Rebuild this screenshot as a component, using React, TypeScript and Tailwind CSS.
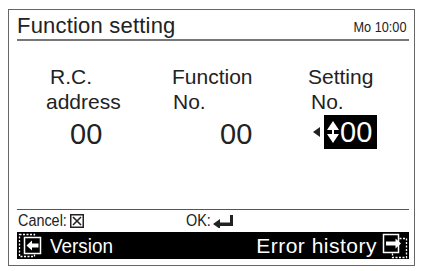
import React from 'react';

const font = { fontFamily: '"Liberation Sans", Arial, sans-serif' };

// page-back icon (dashed page behind, arrow pointing left)
function PrevIcon() {
  return (
    <svg width="26" height="27" viewBox="0 0 26 27" className="shrink-0">
      <rect x="2.5" y="2.5" width="15" height="22" fill="none" stroke="#fff" strokeWidth="1.3" strokeDasharray="2 1.5" />
      <rect x="7.5" y="5.5" width="16" height="16" fill="#000" stroke="#fff" strokeWidth="1.5" />
      <path d="M9.5 13.5 L15 8.5 V11.5 H21.5 V15.5 H15 V18.5 Z" fill="#fff" />
    </svg>
  );
}

// page-forward icon (arrow pointing right, dashed page in front)
function NextIcon() {
  return (
    <svg width="28" height="27" viewBox="0 0 28 27" className="shrink-0">
      <rect x="11.5" y="6.5" width="14" height="19" fill="none" stroke="#fff" strokeWidth="1.3" strokeDasharray="2 1.5" />
      <rect x="2.5" y="2.5" width="15" height="18" fill="#000" stroke="#fff" strokeWidth="1.5" />
      <path d="M20 11.5 L14.5 6.5 V9.5 H5 V13.5 H14.5 V16.5 Z" fill="#fff" />
    </svg>
  );
}

export default function App() {
  return (
    <div className="w-[425px] h-[271px] bg-white pt-[9px] pl-[8px] text-[#222]" style={font}>
      <div className="w-[407px] h-[257px] border border-[#666] flex flex-col">
        {/* header */}
        <div className="mx-[8px] mr-[5px] h-[31px] flex items-end justify-between border-b-2 border-[#777]">
          <span className="text-[22px] leading-none pb-[2px] tracking-[0.2px]">Function setting</span>
          <span className="text-[15px] leading-none pb-[5px] inline-block scale-x-85 origin-right mr-[2px]">Mo 10:00</span>
        </div>

        {/* body */}
        <div className="h-[168px] flex text-[21px] leading-[25px]">
          <div className="w-[155px] pt-[23px] pl-[37px]">
            <div className="pl-[4px]">R.C.</div>
            <div>address</div>
            <div className="text-[29px] leading-[34px] pl-[24px] pt-[3px]">00</div>
          </div>
          <div className="w-[136px] pt-[23px] pl-[8px]">
            <div>Function</div>
            <div className="pl-[1px]">No.</div>
            <div className="text-[29px] leading-[34px] pl-[48px] pt-[3px]">00</div>
          </div>
          <div className="pt-[23px] pl-[8px]">
            <div>Setting</div>
            <div className="pl-[3px]">No.</div>
            <div className="flex items-center pl-[5px] pt-[1px]">
              <svg width="8" height="10" viewBox="0 0 8 10" className="mr-[3px]">
                <path d="M0 5 L7 0 V10 Z" fill="#222" />
              </svg>
              <div className="bg-black h-[34px] w-[53px] flex items-center pl-[3px]">
                <svg width="12" height="22" viewBox="0 0 12 22">
                  <path d="M6 0 L12 9 H0 Z" fill="#fff" />
                  <rect x="5" y="8" width="2" height="6" fill="#fff" />
                  <path d="M6 22 L12 13 H0 Z" fill="#fff" />
                </svg>
                <span className="text-white text-[29px] leading-none ml-[1px]">00</span>
              </div>
            </div>
          </div>
        </div>

        {/* footer */}
        <div className="mx-[8px] mr-[5px] border-t border-[#555]">
          <div className="h-[22px] flex items-center text-[16px] leading-none">
            <span className="inline-block scale-x-90 origin-left ml-[1px]">Cancel:</span>
            <svg width="14" height="14" viewBox="0 0 14 14" className="-ml-[2px]">
              <rect x="0.75" y="0.75" width="12.5" height="12.5" fill="none" stroke="#222" strokeWidth="1.5" />
              <path d="M3 3 L11 11 M11 3 L3 11" stroke="#222" strokeWidth="1.6" />
            </svg>
            <span className="inline-block scale-x-90 origin-left ml-[102px]">OK:</span>
            <svg width="21" height="13" viewBox="0 0 21 13" className="-ml-[1px]">
              <path d="M0 9 L7 4 V7.5 H17 V0 H20 V11 H7 V14 Z" fill="#222" />
            </svg>
          </div>
          <div className="h-[27px] bg-black text-white flex items-center justify-between text-[21px] leading-none">
            <div className="flex items-center">
              <PrevIcon />
              <span className="ml-[7px] inline-block scale-x-90 origin-left">Version</span>
            </div>
            <div className="flex items-center">
              <span className="mr-[4px] tracking-[0.5px]">Error history</span>
              <NextIcon />
            </div>
          </div>
        </div>
      </div>
    </div>
  );
}
